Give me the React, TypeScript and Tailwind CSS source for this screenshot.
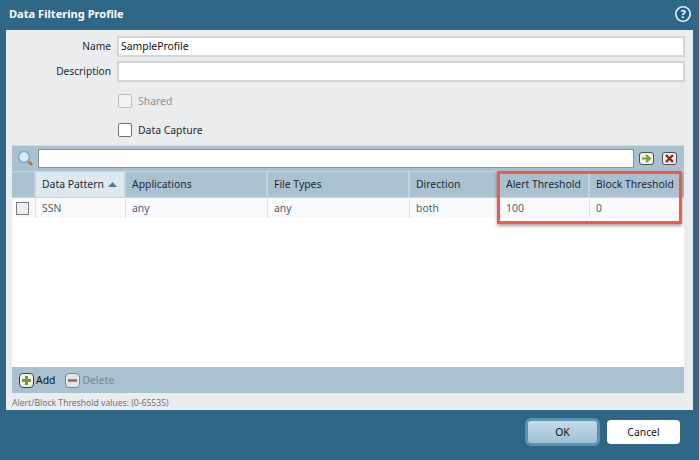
const font = { fontFamily: '"Noto Sans", "DejaVu Sans", sans-serif' };

function Th({ w, children, active }: { w: string; children?: React.ReactNode; active?: boolean }) {
  return (
    <div className={`${w} shrink-0 h-full flex items-center pl-[6px] border-r-2 border-[#c5d3dc] ${active ? "bg-[#dde8ef]" : ""}`}>
      {children}
    </div>
  );
}
function Td({ w, children }: { w: string; children?: React.ReactNode }) {
  return (
    <div className={`${w} shrink-0 h-full flex items-center pl-[6px] border-r border-[#dfe3e6] text-[#53606b]`}>{children}</div>
  );
}

export default function App() {
  return (
    <div style={font} className="relative w-[699px] h-[460px] bg-[#2f6887] text-[10.4px] leading-none text-[#1c2a36] overflow-hidden">
      <div className="h-[30px] flex items-center justify-between pl-[9px] pr-[8px] pb-[2px]">
        <span className="text-white font-bold text-[11.1px]">Data Filtering Profile</span>
        <svg width="16" height="16" viewBox="0 0 16 16">
          <circle cx="8" cy="8" r="7.2" fill="#1f5f8a" stroke="#e6eef3" strokeWidth="1.6" />
          <text x="8" y="12" textAnchor="middle" fontSize="11" fontWeight="700" fill="#fff">?</text>
        </svg>
      </div>
      <div className="ml-[6px] w-[687px] h-[380px] bg-[#ebecee] flex flex-col">
        <div className="flex items-center h-[21px] mt-[6px]">
          <label className="w-[105px] text-right text-[10.2px]">Name</label>
          <div className="ml-[6px] w-[568px] h-[21px] bg-white border-2 border-[#d4d6d6] flex items-center pl-[2px] text-[#111]">SampleProfile</div>
        </div>
        <div className="flex items-center h-[21px] mt-[4px]">
          <label className="w-[105px] text-right text-[10.2px]">Description</label>
          <div className="ml-[6px] w-[568px] h-[21px] bg-white border-2 border-[#d4d6d6]"></div>
        </div>
        <div className="flex items-center h-[16px] mt-[11px] ml-[112px]">
          <div className="w-[14px] h-[14px] bg-[#f1f2f3] border border-[#bcbfc2] rounded-[2px]"></div>
          <span className="ml-[6px] text-[#8d9093]">Shared</span>
        </div>
        <div className="flex items-center h-[16px] mt-[13px] ml-[112px]">
          <div className="w-[14px] h-[14px] bg-white border border-[#6b7076] rounded-[2px]"></div>
          <span className="ml-[6px]">Data Capture</span>
        </div>

        <div className="mt-[7px] ml-[6px] w-[672px] h-[248px] flex flex-col bg-[#aac1cf] border-t border-[#d5d8da]">
          <div className="h-[25px] flex items-center shrink-0">
            <svg className="ml-[5px]" width="17" height="17" viewBox="0 0 17 17">
              <line x1="10" y1="10" x2="15" y2="15" stroke="#b07a3c" strokeWidth="2.5" />
              <circle cx="7" cy="7" r="5.5" fill="#d9ecfb" stroke="#7ea9d6" strokeWidth="1.5" />
            </svg>
            <div className="ml-[4px] w-[596px] h-[19px] bg-white border border-[#8a8f93]"></div>
            <div className="ml-[5px] w-[15px] h-[13px] bg-[#f1f3ea] border border-[#4b5358] rounded-[3px] flex items-center justify-center">
              <svg width="11" height="9" viewBox="0 0 11 9"><path d="M1 4.5h6M5 1l4 3.500-4 3.500" fill="none" stroke="#7d9a26" strokeWidth="2" /></svg>
            </div>
            <div className="ml-[8px] w-[15px] h-[13px] bg-[#f1eeea] border border-[#4b5358] rounded-[3px] flex items-center justify-center">
              <svg width="9" height="9" viewBox="0 0 9 9"><path d="M1 1l7 7M8 1l-7 7" stroke="#8a2a12" strokeWidth="2.4" /></svg>
            </div>
          </div>
          <div className="h-[27px] flex items-center shrink-0 border-y border-[#c5d3dc] pl-[2px] text-[#1c2a36]">
            <Th w="w-[22px]" />
            <Th w="w-[90px]" active>
              Data Pattern
              <svg className="ml-[4px]" width="9" height="5" viewBox="0 0 9 5"><path d="M4.500 0L9 5H0z" fill="#4f7a96" /></svg>
            </Th>
            <Th w="w-[142px]">Applications</Th>
            <Th w="w-[142px]">File Types</Th>
            <Th w="w-[90px]">Direction</Th>
            <Th w="w-[90px]">Alert Threshold</Th>
            <div className="pl-[6px]">Block Threshold</div>
          </div>
          <div className="flex-1 bg-white">
            <div className="h-[20px] flex items-center bg-[#f9fafb] pl-[2px]">
              <div className="w-[22px] shrink-0 h-full flex items-center border-r border-[#dfe3e6] pl-[2px]">
                <div className="w-[13px] h-[13px] bg-[#eceeef] border border-[#7c8186]"></div>
              </div>
              <Td w="w-[90px]">SSN</Td>
              <Td w="w-[142px]">any</Td>
              <Td w="w-[142px]">any</Td>
              <Td w="w-[90px]">both</Td>
              <Td w="w-[90px]">100</Td>
              <div className="pl-[6px] text-[#53606b]">0</div>
            </div>
          </div>
          <div className="h-[26px] shrink-0 flex items-center pl-[7px]">
            <div className="w-[15px] h-[15px] bg-[#f1f3ea] border border-[#3d4347] rounded-[4px] flex items-center justify-center">
              <svg width="11" height="11" viewBox="0 0 11 11"><path d="M5.500 1v9M1 5.500h9" stroke="#7d9a26" strokeWidth="3" /></svg>
            </div>
            <span className="ml-[2px] text-[#111]">Add</span>
            <div className="ml-[10px] w-[15px] h-[15px] bg-[#e2e5e6] border border-[#80888d] rounded-[4px] flex items-center justify-center">
              <svg width="9" height="3" viewBox="0 0 9 3"><path d="M0 1.500h9" stroke="#97605a" strokeWidth="2.400" /></svg>
            </div>
            <span className="ml-[2px] text-[#7b8790]">Delete</span>
          </div>
        </div>
        <div className="ml-[6px] mt-[6px] text-[8.6px] text-[#6b7379]">Alert/Block Threshold values: (0-65535)</div>
      </div>
      <div className="flex items-center justify-end mt-[8px] pr-[19px] gap-[7px]">
        <button className="w-[75px] h-[28px] rounded-[6px] bg-gradient-to-b from-[#c6dce9] to-[#9dbfd3] border-[3px] border-[#5b93b2] text-[#111] text-[10.4px]">OK</button>
        <button className="w-[73px] h-[24px] rounded-[4px] bg-white text-[#111] text-[10.4px]">Cancel</button>
      </div>
      <div className="absolute left-[497px] top-[171px] w-[185px] h-[53px] border-[3px] border-[#f4584a] shadow-[0_2px_3px_rgba(0,0,0,0.35)]"></div>
    </div>
  );
}
